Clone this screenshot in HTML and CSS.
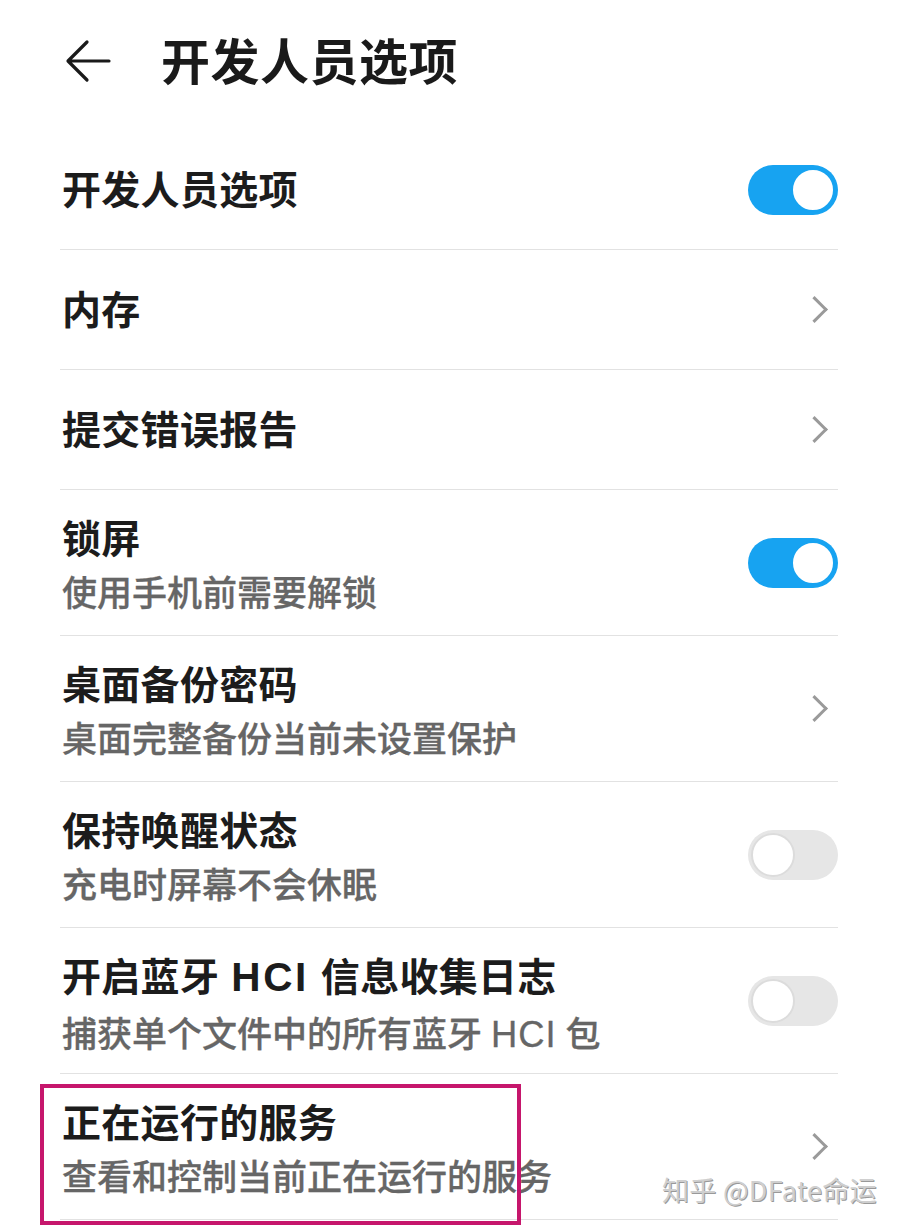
FILE: index.html
```html
<!DOCTYPE html>
<html lang="zh-CN">

<head>
  <meta charset="UTF-8">
  <meta name="viewport" content="width=device-width, initial-scale=1">
  <title>开发人员选项</title>
  <link rel="stylesheet" href="styles.css">
</head>

<body>
  <div class="tela">
    <header class="topo">
      <svg class="voltar" width="46" height="46" viewBox="0 0 46 46">
        <path d="M44 23 H4 M22 4 L3 23 L22 42" fill="none" stroke="#1a1a1a" stroke-width="3.2" stroke-linecap="round" stroke-linejoin="round"/>
      </svg>
      <h1>开发人员选项</h1>
    </header>

    <div class="lista">
      <div class="item">
        <div class="textos"><div class="titulo">开发人员选项</div></div>
        <span class="chave ligada"></span>
      </div>
      <div class="item">
        <div class="textos"><div class="titulo">内存</div></div>
        <span class="seta"></span>
      </div>
      <div class="item">
        <div class="textos"><div class="titulo">提交错误报告</div></div>
        <span class="seta"></span>
      </div>
      <div class="item duplo">
        <div class="textos">
          <div class="titulo">锁屏</div>
          <div class="sub">使用手机前需要解锁</div>
        </div>
        <span class="chave ligada"></span>
      </div>
      <div class="item duplo">
        <div class="textos">
          <div class="titulo">桌面备份密码</div>
          <div class="sub">桌面完整备份当前未设置保护</div>
        </div>
        <span class="seta"></span>
      </div>
      <div class="item duplo">
        <div class="textos">
          <div class="titulo">保持唤醒状态</div>
          <div class="sub">充电时屏幕不会休眠</div>
        </div>
        <span class="chave"></span>
      </div>
      <div class="item duplo">
        <div class="textos">
          <div class="titulo">开启蓝牙 <span class="lat">HCI</span> 信息收集日志</div>
          <div class="sub">捕获单个文件中的所有蓝牙 <span class="lat">HCI</span> 包</div>
        </div>
        <span class="chave"></span>
      </div>
      <div class="item duplo ultimo">
        <div class="textos">
          <div class="titulo">正在运行的服务</div>
          <div class="sub">查看和控制当前正在运行的服务</div>
        </div>
        <span class="seta"></span>
        <div class="marca"></div>
      </div>
    </div>

    <div class="agua">知乎 @DFate命运</div>
  </div>
</body>

</html>
```

FILE: styles.css
```css
body {
  margin: 0px;
  background-color: #FFFFFF;
  font-family: "Noto Sans CJK SC", "Noto Sans", sans-serif;
  color: #1a1a1a;
}

.tela {
  position: relative;
  width: 898px;
  height: 1228px;
  overflow: hidden;
}

.topo {
  height: 130px;
  display: flex;
  align-items: flex-start;
  padding-left: 65px;
  box-sizing: border-box;
}

.voltar {
  margin-top: 38px;
}

.topo h1 {
  margin: 0 0 0 50px;
  font-size: 49px;
  line-height: 60px;
  margin-top: 29px;
  font-weight: 700;
  letter-spacing: 0.5px;
}

.lista {
  padding: 0 60px;
}

.item {
  position: relative;
  display: flex;
  align-items: center;
  height: 119px;
  border-bottom: 1px solid #e2e2e2;
  padding-left: 2px;
}

.item.duplo {
  height: 145px;
  align-items: stretch;
}

.textos {
  flex: 1;
  margin-bottom: 6px;
}

.titulo {
  font-size: 39px;
  line-height: 50px;
  font-weight: 700;
  color: #1c1c1c;
  letter-spacing: 0.3px;
}

.duplo .textos {
  padding-top: 21px;
  margin-bottom: 0;
}

.duplo .chave,
.duplo .seta {
  align-self: center;
}

.sub {
  margin-top: 8px;
  font-size: 35px;
  line-height: 44px;
  font-weight: 500;
  color: #666666;
  -webkit-text-stroke: 0.3px #666666;
}

.lat {
  font-family: "Liberation Sans", Arial, sans-serif;
  font-size: 1.04em;
  letter-spacing: 2.5px;
  margin: 0 3px;
}

.titulo .lat {
  font-weight: 700;
}

.sub .lat {
  letter-spacing: 1px;
  margin: 0 1px;
}

.chave {
  position: relative;
  width: 90px;
  height: 50px;
  border-radius: 25px;
  background-color: #e6e6e6;
}

.chave::after {
  content: "";
  position: absolute;
  left: 3px;
  top: 3px;
  width: 40px;
  height: 40px;
  border-radius: 50%;
  background-color: #FFFFFF;
  border: 2px solid #dcdcdc;
}

.chave.ligada {
  background-color: #17a3f1;
}

.chave.ligada::after {
  left: auto;
  right: 3px;
  border-color: #17a3f1;
}

.seta {
  width: 16px;
  height: 16px;
  margin-right: 14px;
  border-top: 3px solid #9a9a9a;
  border-right: 3px solid #9a9a9a;
  transform: rotate(45deg);
}

.marca {
  position: absolute;
  left: -20px;
  top: 10px;
  width: 473px;
  height: 133px;
  border: 4px solid #c6166c;
}

.agua {
  position: absolute;
  left: 662px;
  top: 1172px;
  font-size: 27px;
  line-height: 36px;
  color: #cfcfcf;
  text-shadow: 1px 1px 0 #999999;
  letter-spacing: 0.3px;
}
```
